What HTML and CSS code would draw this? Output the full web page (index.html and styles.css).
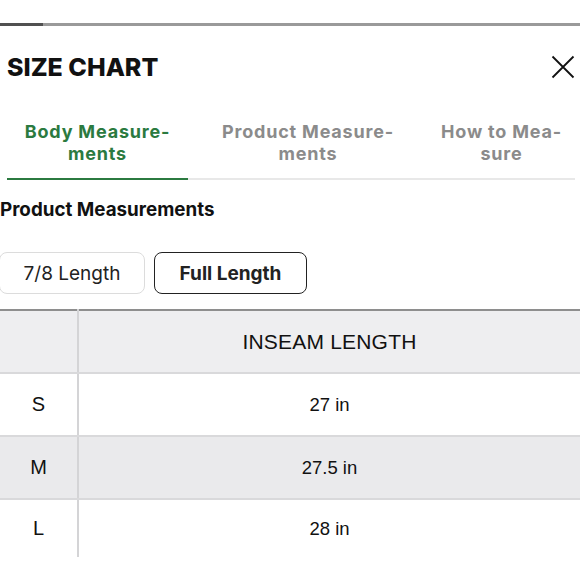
FILE: index.html
```html
<!DOCTYPE html>
<html lang="en">
<head>
<meta charset="utf-8">
<title>Size Chart</title>
<link rel="stylesheet" href="styles.css">
</head>
<body>
<div class="modal">
  <div class="progress"><div class="progress-fill"></div></div>
  <div class="header">
    <h1 class="title">SIZE CHART</h1>
    <button class="close" aria-label="Close">
      <svg width="24" height="24" viewBox="0 0 24 24"><path d="M1.5 1.5 L22.5 22.5 M22.5 1.5 L1.5 22.5" stroke="#111" stroke-width="1.8" fill="none"/></svg>
    </button>
  </div>
  <div class="tabs">
    <div class="tab tab-active tab-body">Body Measure-<br>ments</div>
    <div class="tab tab-product">Product Measure-<br>ments</div>
    <div class="tab tab-how">How to Mea-<br>sure</div>
  </div>
  <h2 class="section-title">Product Measurements</h2>
  <div class="toggles">
    <button class="toggle">7/8 Length</button>
    <button class="toggle toggle-active">Full Length</button>
  </div>
  <table class="chart">
    <tr class="row-head"><td class="size"></td><td class="val head">INSEAM LENGTH</td></tr>
    <tr class="row-light"><td class="size">S</td><td class="val">27 in</td></tr>
    <tr class="row-grey"><td class="size">M</td><td class="val">27.5 in</td></tr>
    <tr class="row-light"><td class="size">L</td><td class="val">28 in</td></tr>
  </table>
</div>
</body>
</html>
```
FILE: styles.css
```css
html, body {
  margin: 0;
  padding: 0;
  background: #fff;
}
body {
  font-family: "Liberation Sans", Arial, sans-serif;
  color: #111;
  width: 580px;
  height: 580px;
  overflow: hidden;
}
.modal {
  padding-top: 23px;
}
.progress {
  height: 3px;
  background: #9a9a9a;
  display: flex;
}
.progress-fill {
  width: 43px;
  background: #505050;
}
.header {
  display: flex;
  align-items: center;
  justify-content: space-between;
  padding: 0 5px 0 7px;
  height: 82px;
}
.title {
  margin: 0;
  font-family: "Inter", "Liberation Sans", sans-serif;
  font-size: 25px;
  font-weight: 800;
  color: #111;
}
.close {
  border: 0;
  background: none;
  padding: 0;
  width: 24px;
  height: 24px;
  display: flex;
}
.tabs {
  margin-left: 7px;
  width: 568px;
  display: flex;
  border-bottom: 2px solid #e8e8e8;
  margin-top: 13px;
}
.tab {
  font-family: "Inter", "Liberation Sans", sans-serif;
  font-size: 18px;
  font-weight: 700;
  letter-spacing: 0.8px;
  line-height: 22px;
  text-align: center;
  color: #8b8b8b;
  padding-bottom: 13px;
}
.tab-body { width: 181px; }
.tab-product { width: 240px; }
.tab-how { width: 147px; }
.tab-active {
  color: #2b7a40;
  border-bottom: 2px solid #2b7a40;
  margin-bottom: -2px;
}
.section-title {
  margin: 20px 0 0 0;
  font-family: "Inter", "Liberation Sans", sans-serif;
  font-size: 18.8px;
  font-weight: 700;
  line-height: 20px;
  color: #111;
}
.toggles {
  display: flex;
  gap: 9px;
  margin-top: 32px;
  margin-left: -1px;
}
.toggle {
  font-family: "Inter", "Liberation Sans", sans-serif;
  height: 42px;
  border-radius: 8px;
  border: 1.5px solid #dcdcdc;
  background: #fff;
  font-size: 19px;
  color: #222;
  padding: 0;
  width: 146px;
}
.toggle-active {
  border-color: #222;
  font-weight: 700;
  width: 153px;
}
.chart {
  margin-top: 15px;
  width: 580px;
  border-collapse: collapse;
  border-top: 2px solid #8e8e8e;
}
.chart td {
  height: 61px;
  text-align: center;
  padding: 0;
  border-bottom: 2px solid #d9d9db;
  font-size: 18.5px;
  color: #111;
}
.chart tr:last-child td {
  border-bottom: 0;
  height: 57px;
}
.chart .size {
  width: 77px;
  border-right: 2px solid #d4d4d6;
  font-size: 20px;
}
.chart .head {
  font-size: 21px;
  letter-spacing: 0.2px;
}
.row-head td { background: #eeeef0; }
.row-grey td { background: #eaeaec; }
.row-light td { background: #fff; }
```
